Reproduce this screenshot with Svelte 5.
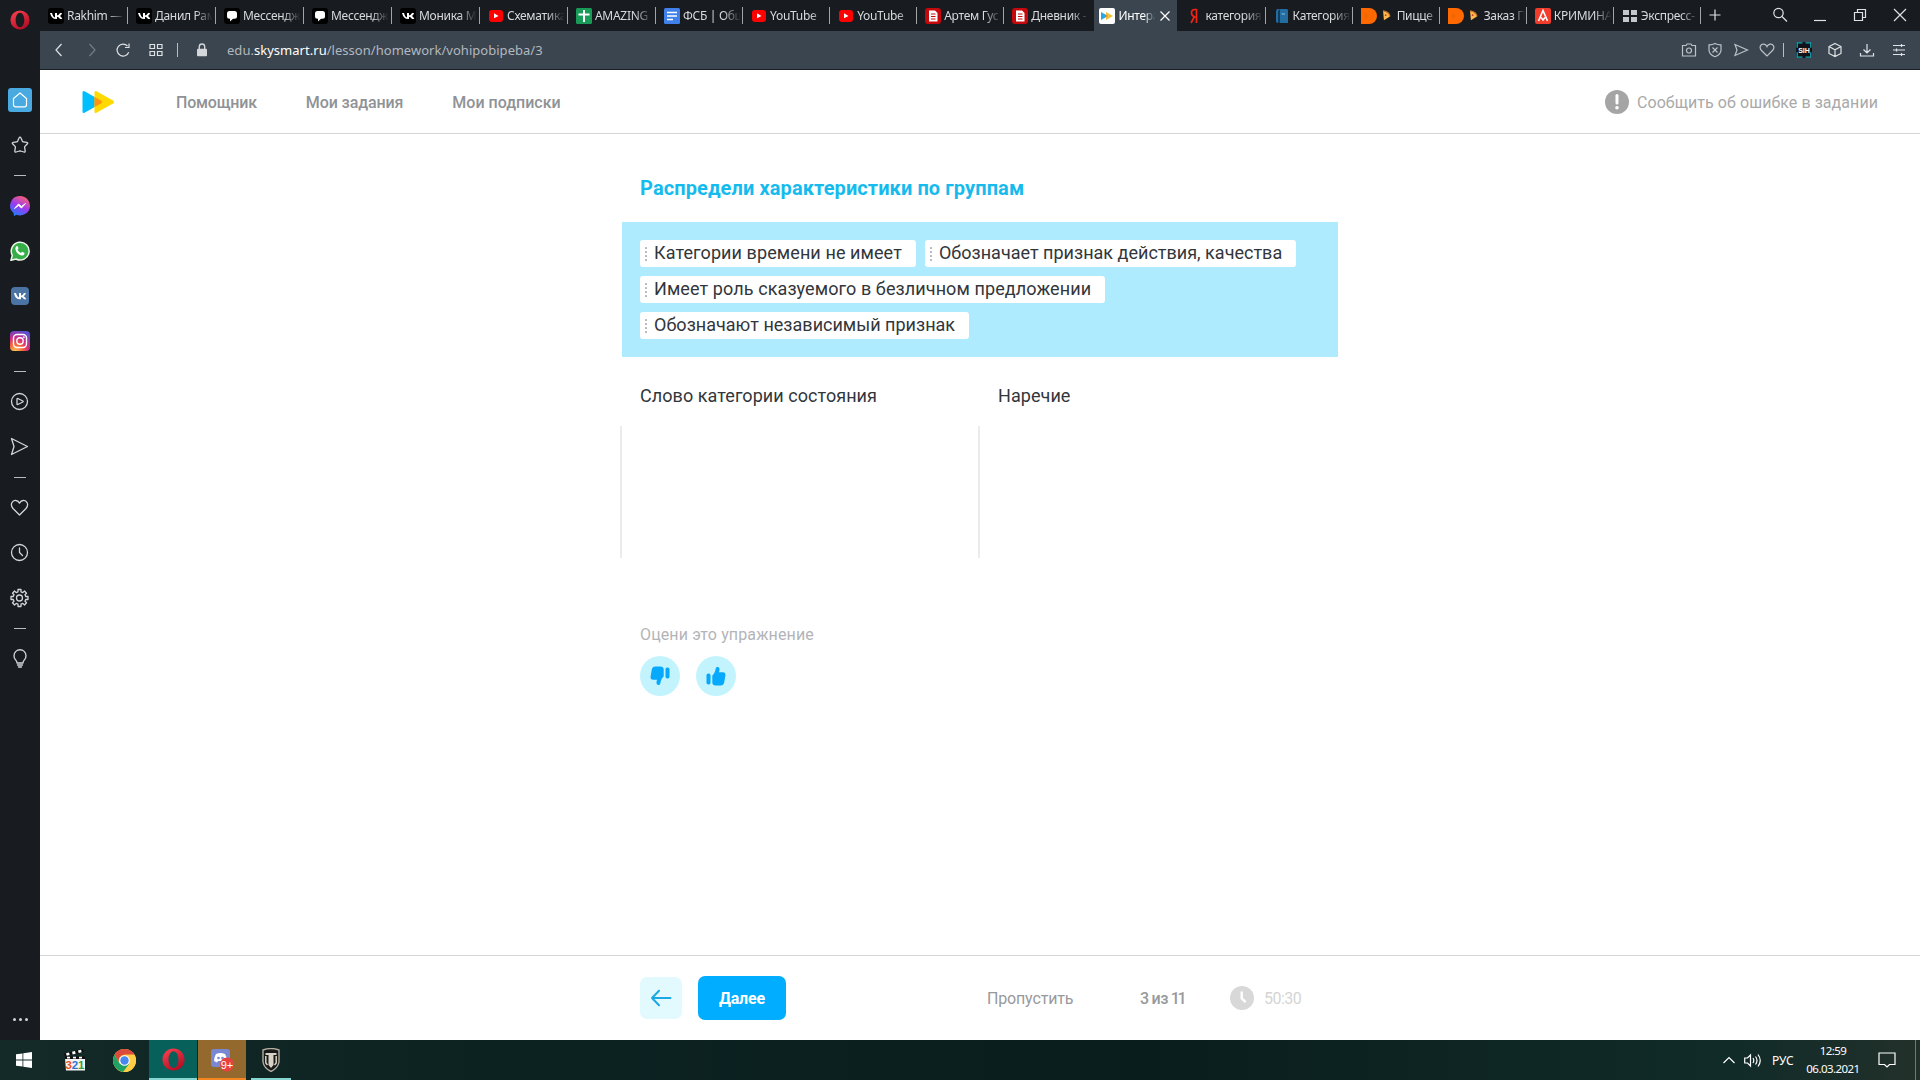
<script>
  const tabs = [
    ['vk', 'Rakhim — '], ['vk', 'Данил Рам'], ['msg', 'Мессендже'], ['msg', 'Мессендже'], ['vk', 'Моника М'],
    ['yt', 'Схематика'], ['sheet', 'AMAZING'], ['doc', 'ФСБ | Общ'], ['yt', 'YouTube'], ['yt', 'YouTube'],
    ['diary', 'Артем Гус'], ['diary', 'Дневник -'], ['sky', 'Интера'], ['ya', 'категория'], ['book', 'Категория'],
    ['dodo', 'Пицце'], ['dodo', 'Заказ П'], ['ali', 'КРИМИНА'], ['grid', 'Экспресс-']
  ];
  // Each chip is a label and whether it is set with wider tracking.
  const rows = [
    [['Категории времени не имеет', true], ['Обозначает признак действия, качества', false]],
    [['Имеет роль сказуемого в безличном предложении', true]],
    [['Обозначают независимый признак', false]]
  ];
  const side = ['home', 'star', '-', 'messenger', 'whatsapp', 'vk', 'insta', '-', 'play', 'send', '-', 'heart', 'clock', 'gear', '-', 'bulb'];
</script>

{#snippet favicon(k)}
  <svg class="fav" viewBox="0 0 16 16">
    {#if k === 'vk'}
      <rect width="16" height="16" rx="3" fill="#000" /><path d="M2 5h2q1 4 3 4.500V5h2v2.500Q11 7 12 5h2q-.5 2-2 3 1.500 1 2.300 3H12q-1-2-3-2.300V11H8Q3.500 11 2 5z" fill="#fff" />
    {:else if k === 'msg'}
      <rect width="16" height="16" rx="3" fill="#000" /><path d="M5.500 3h5A2.500 2.500 0 0 1 13 5.500v2.800a2.500 2.500 0 0 1-2.500 2.500H9L6 13.500v-2.700h-.5A2.500 2.500 0 0 1 3 8.300V5.500A2.500 2.500 0 0 1 5.500 3z" fill="#fff" />
    {:else if k === 'yt'}
      <rect x="1" y="2" width="14" height="12" rx="3" fill="#f00" /><path d="M6 5.300v5L10.500 8z" fill="#fff" />
    {:else if k === 'sheet'}
      <rect width="16" height="16" rx="1.500" fill="#199b58" /><path d="M8 2v12M2.500 6.500h11" stroke="#fff" stroke-width="2" />
    {:else if k === 'doc'}
      <rect width="16" height="16" rx="1.500" fill="#3f80ea" /><path d="M3 4.500h10M3 8h10M3 11.500h6" stroke="#fff" stroke-width="1.700" />
    {:else if k === 'diary'}
      <rect width="16" height="16" rx="3" fill="#c4080c" /><path d="M4 2.500h6l2.500 2.500v8.500H4z" fill="#fff" /><path d="M6 6h4.500M6 8.500h4.500M6 11h4.500" stroke="#c4080c" />
    {:else if k === 'sky'}
      <rect width="16" height="16" rx="2" fill="#fff" /><path d="M2 4l7 4-7 4z" fill="#28a8e8" /><path d="M7 4l7 4-7 4z" fill="#ecc23c" /><path d="M7 6.900L9 8 7 9.100z" fill="#e27a38" />
    {:else if k === 'ya'}
      <path d="M10.500 1v14M10.500 1.500H8.700Q5.500 1.500 5.500 5q0 3 4 4.200M8.200 8.800L5 15" fill="none" stroke="#f32313" stroke-width="1.700" />
    {:else if k === 'book'}
      <path d="M3 1h10l1 1v13H4l-2-1V3z" fill="#246da0" /><path d="M4 3l2-2v14H4z" fill="#123b60" /><path d="M7 5h4v2H8z" fill="#5598c2" />
    {:else if k === 'dodo'}
      <path d="M0 0h8a8 8 0 0 1 0 16H0z" fill="#ff6900" /><path d="M4 5l4 3-4 3z" fill="#ee6505" />
    {:else if k === 'ali'}
      <rect width="16" height="16" rx="2" fill="#f23c2b" /><path d="M3.500 13L8 2.500l4.500 10.500M6 9.500l2 2.500 2-2.500" fill="none" stroke="#fff" stroke-width="1.600" />
    {:else}
      <path d="M1 2h6v5H1zM9 2h6v5H9zM1 9h6v5H1zM9 9h6v5H9z" fill="#c5c7ca" />
    {/if}
  </svg>
{/snippet}

{#snippet operaO(size)}
  <svg width={size} height={size} viewBox="0 0 24 24"><defs><linearGradient id="og" x2=".6" y2="1"><stop stop-color="#ff4450" /><stop offset="1" stop-color="#b40e26" /></linearGradient></defs><path fill-rule="evenodd" fill="url(#og)" d="M12 .5a11.500 11.500 0 1 0 0 23 11.500 11.500 0 0 0 0-23zM12 3.300c3 0 5.200 3.800 5.200 8.700S15 20.700 12 20.700 6.800 16.900 6.800 12 9 3.300 12 3.300z" /></svg>
{/snippet}

{#snippet thumb()}
  <rect x="0.500" y="7.500" width="4" height="11" rx="1.800" /><path d="M6.300 9.500C8.500 8 9.300 5 9.800 2.300 10.100.6 12.800.3 13.400 2.400 13.800 4 13.200 5.400 12.900 6.300h4c2 0 2.800 1.500 2.500 3.200l-1.200 6.900c-.4 2-1.600 3-3.500 3H9.500c-2 0-3.200-1.200-3.200-3z" />
{/snippet}

<div class="screen">
  <aside>
    <div class="opera">{@render operaO(20)}</div>
    {#each side as s}
      {#if s === '-'}
        <div class="dash"><i></i></div>
      {:else}
        <div class="sitem">
          {#if s === 'home'}
            <svg class="home" viewBox="0 0 24 24"><path d="M12 5l6.500 5.500v6.300a2 2 0 0 1-2 2h-9a2 2 0 0 1-2-2v-6.300z" /></svg>
          {:else if s === 'messenger'}
            <svg class="color" viewBox="0 0 20 20"><defs><linearGradient id="mg" x1=".2" y1="1" x2=".7" y2="0"><stop stop-color="#1683ff" /><stop offset=".5" stop-color="#9a3bf2" /><stop offset="1" stop-color="#ff6070" /></linearGradient></defs><path d="M10 0a10 9.700 0 1 1-3.500 18.800L4 20l-.5-3A9.700 9.700 0 0 1 10 0z" fill="url(#mg)" /><path d="M4.500 12.500l4-4.500 3 2.500 4-3-4 4.500-3-2.500z" fill="#fff" stroke="#fff" /></svg>
          {:else if s === 'whatsapp'}
            <svg class="color" viewBox="0 0 20 20"><path d="M1 19.300l1.300-5A8.900 8.900 0 1 1 6 18z" fill="#36ae47" stroke="#eaf7ea" stroke-width="1.500" /><path d="M6 5.500q1.500-1 2 .5l.5 1.500-1 1.200q1.200 2.200 3.500 3.300l1.200-1.200 2.300 1.200q0 2.500-2.500 2.500Q6 13.500 5.300 7.500z" fill="#fff" /></svg>
          {:else if s === 'vk'}
            <svg class="color" viewBox="0 0 20 20"><rect x="1" y="1" width="18" height="18" rx="4" fill="#4b74a5" /><path d="M4 7h2q1.200 4.200 3 4.500V7h2v2.700Q13 9 14 7h2q-.6 2-2.300 3.200 1.700 1.100 2.600 3.100H14q-1-2-3-2.400v2.400H10Q5 13.300 4 7z" fill="#fff" /></svg>
          {:else if s === 'insta'}
            <svg class="color" viewBox="0 0 20 20"><defs><radialGradient id="ig" cx=".25" cy="1.050" r="1.100"><stop stop-color="#ffd25a" /><stop offset=".35" stop-color="#f5653c" /><stop offset=".65" stop-color="#d12a86" /><stop offset="1" stop-color="#5a4fd0" /></radialGradient></defs><rect width="20" height="20" rx="4" fill="url(#ig)" /><g fill="none" stroke="#fff" stroke-width="1.400"><rect x="3.500" y="3.500" width="13" height="13" rx="3.500" /><circle cx="10" cy="10" r="3.200" /><circle cx="13.800" cy="6.200" r=".3" /></g></svg>
          {:else}
            <svg class="line" viewBox="0 0 20 20">
              {#if s === 'star'}<path d="M10 2.200q.7 0 1 .8l1.300 3.100q.3.600 1 .7l3.500.5q1.500.4.600 1.500l-2.500 2.600q-.4.400-.3 1l.6 3.600q0 1.500-1.300 1L10.500 16H9.500l-3.400 1q-1.300.4-1.300-1l.6-3.600q.1-.6-.3-1L2.600 8.800Q1.700 7.700 3.200 7.300l3.500-.5q.7-.1 1-.7L9 3q.3-.8 1-.8z" />
              {:else if s === 'play'}<circle cx="9.500" cy="9.500" r="8" /><path d="M7 7q0-.8.800-.5l5 2.500q.8.500 0 1l-5 2.500Q7 12.800 7 12z" />
              {:else if s === 'send'}<path d="M1.500 1.500L17.500 9.500 1.500 17.500 4 9.500z" />
              {:else if s === 'heart'}<path d="M9.500 17L3 10.500C-.5 6.500 2.500 2 6 2.500c2 .2 3 1.500 3.500 2.700.5-1.200 1.500-2.500 3.500-2.700 3.500-.5 6.500 4 3 8z" />
              {:else if s === 'clock'}<circle cx="9.500" cy="9.500" r="8" /><path d="M9.500 5v4.500l3 3" />
              {:else if s === 'gear'}<path d="M8 1.500h3v2.300l1.800.8L14.500 3l2 2.200-1.500 1.600.7 1.700H18v3h-2.300l-.7 1.700 1.500 1.600-2 2.200-1.700-1.600-1.800.8v2.300H8v-2.300l-1.800-.8L4.500 17l-2-2.200L4 13.200l-.7-1.700H1v-3h2.300L4 6.800 2.500 5.200l2-2.200 1.700 1.600L8 3.800z" /><circle cx="9.500" cy="10" r="3" />
              {:else}<path d="M7 14q0-1.500-1.500-3.300a6 6 0 1 1 9 0Q13 12.500 13 14zM7.500 16h5M8.500 18h3" />{/if}
            </svg>
          {/if}
        </div>
      {/if}
    {/each}
    <div class="dots"><i></i><i></i><i></i></div>
  </aside>

  <div class="browser">
    <div class="tabbar">
      {#each tabs as [k, t], i}
        <div class="tab" class:wide={i < 7} class:active={i === 12} class:nosep={i === 11 || i === 12}>
          {@render favicon(k)}
          {#if k === 'dodo'}<svg class="pizza" viewBox="0 0 10 14"><path d="M1 1q7 1 8 6.500L2 12z" fill="#ffb84d" /><path d="M1 1q7 1 8 6.500" fill="none" stroke="#c87328" stroke-width="1.600" /><circle cx="4" cy="6" r="1" fill="#c23b22" /></svg>{/if}
          <span class="tt">{t}</span>
          {#if i === 12}<svg class="x" viewBox="0 0 12 12"><path d="M1.500 1.500l9 9M10.500 1.500l-9 9" /></svg>{/if}
        </div>
      {/each}
      <svg class="ui plus" viewBox="0 0 16 16"><path d="M8 2.500v11M2.500 8h11" /></svg>
      <div class="winctl">
        <svg class="ui" viewBox="0 0 16 16"><circle cx="6.500" cy="6" r="4.700" /><path d="M10 9.500l5 5" /></svg>
        <svg class="ui" viewBox="0 0 16 16"><path d="M2 13.500h12" /></svg>
        <svg class="ui" viewBox="0 0 16 16"><path d="M2.500 5.500h8v8h-8zM5.500 5.500v-3h8v8h-3" /></svg>
        <svg class="ui" viewBox="0 0 16 16"><path d="M2 2l12 12M14 2L2 14" /></svg>
      </div>
    </div>

    <div class="address">
      <svg class="ui back" viewBox="0 0 16 16"><path d="M10.500 2L5 8l5.500 6" /></svg>
      <svg class="ui fwd" viewBox="0 0 16 16"><path d="M5.500 2L11 8l-5.500 6" /></svg>
      <svg class="ui reload" viewBox="0 0 16 16"><path d="M13.700 10.200A6 6 0 1 1 12.500 4M14 1.500v4h-4" /></svg>
      <svg class="ui tiles" viewBox="0 0 16 16"><path d="M2 2.500h4.500v4H2zM9.500 2.500H14v4H9.500zM2 9.500h4.500v4H2zM9.500 9.500H14v4H9.500z" /></svg>
      <i class="vbar"></i>
      <svg class="lock" viewBox="0 0 12 14"><path d="M3.300 6V3.700a2.700 2.700 0 0 1 5.400 0V6" fill="none" stroke="#d3d7da" stroke-width="1.400" /><rect x="1" y="5.700" width="10" height="7.600" rx="1" fill="#d3d7da" /></svg>
      <div class="url">edu.<b>skysmart.ru</b>/lesson/homework/vohipobipeba/3</div>
      <div class="ext">
        <svg class="ui dim" viewBox="0 0 16 16"><path d="M1.500 3.500H5l1-1.500h4l1 1.500h3.500v10.500h-13z" /><circle cx="8" cy="8.500" r="2.500" /></svg>
        <svg class="ui dim" viewBox="0 0 16 16"><path d="M8 1.500Q11 3 14 2.800V8q0 4.500-6 6.700Q2 12.500 2 8V2.800Q5 3 8 1.500zM5.500 5.500l5 5M10.500 5.500l-5 5" /></svg>
        <svg class="ui dim" viewBox="0 0 16 16"><path d="M2 2.500L14.500 8 2 13.500 4 8z" /></svg>
        <svg class="ui dim" viewBox="0 0 16 16"><path d="M8 14L2.500 8.500C-.5 5 2 1.700 5 2.200 6.800 2.500 7.600 3.500 8 4.500c.4-1 1.200-2 3-2.300 3-.5 5.500 2.800 2.500 6.300z" /></svg>
        <i class="vbar"></i>
        <svg class="sih" viewBox="0 0 16 16"><rect width="16" height="16" rx="2" fill="#101418" /><path d="M6.500.8H1.200v5M9.500.8h5.300v5M6.500 15.200H1.200v-5M9.500 15.200h5.300v-5" fill="none" stroke="#13a8b8" stroke-width="1.300" /><text x="8" y="10.600" text-anchor="middle">SIH</text></svg>
        <svg class="ui" viewBox="0 0 16 16"><path d="M8 1.500l6 3v7l-6 3-6-3v-7zM2 4.500l6 3.200 6-3.200M8 7.700v6.800" /></svg>
        <svg class="ui" viewBox="0 0 16 16"><path d="M8 2v8.500M4.500 7.500L8 11l3.500-3.500M1.500 11v3h13v-3" /></svg>
        <svg class="ui" viewBox="0 0 16 16"><path d="M2 3.500h12M2 8h12M2 12.500h12M10.500 2v3M5.500 6.500v3M10.500 11v3" /></svg>
      </div>
    </div>

    <header>
      <svg class="logo" viewBox="0 0 32 24"><path d="M0.500 2.500Q.5.300 2.500 1.300L19 10.500q2 1.500 0 3L2.500 22.700Q.5 23.700.5 21.500z" fill="#00bfff" /><path d="M12.500 2.500q0-2.200 2-1.200L31 10.500q2 1.500 0 3l-16.500 9.200q-2 1-2-1.200z" fill="#ffd900" /><path d="M12.500 6.900L19 10.500q2 1.500 0 3l-6.500 3.600z" fill="#ff9314" /></svg>
      <nav><span class="n1">Помощник</span><span class="n2">Мои задания</span><span>Мои подписки</span></nav>
      <div class="report"><svg viewBox="0 0 24 24"><circle cx="12" cy="12" r="12" fill="#a5a5a5" /><path d="M12 5.500v7.500" stroke="#fff" stroke-width="3" stroke-linecap="round" /><circle cx="12" cy="17.800" r="1.800" fill="#fff" /></svg><span>Сообщить об ошибке в задании</span></div>
    </header>

    <main>
      <h1>Распредели характеристики по группам</h1>
      <section class="bank">
        {#each rows as r}
          <div class="row">
            {#each r as [label, loose]}
              <div class="chip"><svg viewBox="0 0 4 14" fill="#b4b8bb"><rect x="1" width="2" height="2" rx=".5" /><rect x="1" y="4" width="2" height="2" rx=".5" /><rect x="1" y="8" width="2" height="2" rx=".5" /><rect x="1" y="12" width="2" height="2" rx=".5" /></svg><span class:loose>{label}</span></div>
            {/each}
          </div>
        {/each}
      </section>
      <section class="groups">
        <div><h2>Слово категории состояния</h2><div class="drop"></div></div>
        <div><h2>Наречие</h2><div class="drop"></div></div>
      </section>
      <p class="rate">Оцени это упражнение</p>
      <div class="votes">
        <div><svg class="down" viewBox="0 0 20 20">{@render thumb()}</svg></div>
        <div><svg viewBox="0 0 20 20">{@render thumb()}</svg></div>
      </div>
    </main>

    <footer>
      <div class="prev"><svg viewBox="0 0 22 18"><path d="M20.500 9H2M9 1.800L2 9l7 7.200" /></svg></div>
      <div class="next">Далее</div>
      <span class="skip">Пропустить</span>
      <span class="count">3 из <i>11</i></span>
      <svg class="timer" viewBox="0 0 24 24"><circle cx="12" cy="12" r="12" fill="#d8d8d8" /><path d="M11.700 6.500v6l3.300 3" fill="none" stroke="#fff" stroke-width="2.400" stroke-linecap="round" /></svg>
      <span class="time">50:30</span>
    </footer>
  </div>

  <div class="taskbar">
    <div class="slot"><svg width="16" height="16" viewBox="0 0 16 16"><path d="M0 2.300l6.500-.9v6.100H0zM7.300 1.300L16 0v7.500H7.300zM0 8.400h6.500v6.200L0 13.700zM7.300 8.400H16V16l-8.700-1.300z" fill="#fff" /></svg></div>
    <div class="slot mpc"><svg width="22" height="22" viewBox="0 0 22 22"><path d="M1 9h20v12.500H2z" fill="#f4f4f4" /><path d="M0 4.500L19 0l.7 3L.7 7.500zM1 7.500h20v2.500H1z" fill="#111" /><path d="M2 4.200l3-.7.700 2.600-3 .7zM8 2.800l3-.7.700 2.600-3 .7zM14 1.400l3-.7.700 2.600-3 .7zM3 7.800h3v1.600H3zM9 7.800h3v1.600H9zM15 7.800h3v1.600h-3z" fill="#fff" /><text x="1.500" y="20" fill="#e8541c">3</text><text x="7.800" y="20" fill="#2c74d8">2</text><text x="14" y="20" fill="#38a030">1</text></svg></div>
    <div class="slot chrome"><svg width="23" height="23" viewBox="0 0 24 24"><circle cx="12" cy="12" r="12" fill="#ffce44" /><path d="M1.600 6A12 12 0 0 1 22.400 6H12a6 6 0 0 0-5.200 9z" fill="#dc4a3c" /><path d="M1.600 6a12 12 0 0 0 8.800 17.900L17.200 15H12a6 6 0 0 1-5.200 0z" fill="#1fa362" /><path d="M22.400 6H12l5.200 9-5.200 9A12 12 0 0 0 22.400 6z" fill="#ffce44" /><circle cx="12" cy="12" r="5.500" fill="#fff" /><circle cx="12" cy="12" r="4.400" fill="#4788ee" /></svg></div>
    <div class="slot opera-t">{@render operaO(23)}</div>
    <div class="slot discord"><svg width="24" height="24" viewBox="0 0 24 24"><rect x="1" y="1" width="19" height="18" rx="3" fill="#7a88d2" /><path d="M6 6q4.500-2 9 0 2 3 2 7l-3 1.500-1-1.500H8l-1 1.500L4 13q0-4 2-7z" fill="#fff" /><circle cx="8.500" cy="10" r="1.300" fill="#7a88d2" /><circle cx="12.500" cy="10" r="1.300" fill="#7a88d2" /><circle cx="17" cy="16.500" r="7" fill="#e8413d" /><text x="17" y="20.500" text-anchor="middle" fill="#fff">9+</text></svg></div>
    <div class="slot wot"><svg width="20" height="24" viewBox="0 0 20 24"><path d="M2 2q8-3 16 0v12q-1 6-8 9.500Q3 20 2 14z" fill="#17191a" stroke="#b3ad9f" stroke-width="1.400" /><path d="M4.500 5h11v2h-3v10L10 20l-2.500-3V7h-3z" fill="#d8d2c4" /><path d="M4.800 8v7l1.700 2M15.200 8v7l-1.700 2" fill="none" stroke="#d8d2c4" stroke-width="1.500" /></svg></div>
    <div class="tray">
      <svg class="chev" viewBox="0 0 12 8"><path d="M.5 7L6 1.500 11.500 7" /></svg>
      <svg class="spk" viewBox="0 0 17 15"><path d="M.7 5h2.800L6.500 2v11L3.500 10H.7zM9 5q1.500 2.500 0 5M11.500 3.500q3 4 0 8M14 1.500q4.500 6 0 12" /></svg>
      <span class="lang">РУС</span>
      <div class="dt"><span>12:59</span><span>06.03.2021</span></div>
      <svg class="notif" viewBox="0 0 18 16"><path d="M1 1h16v11.500h-5.500L9 15l-2.500-2.500H1z" /></svg>
      <i class="peek"></i>
    </div>
  </div>
</div>

<style>
  :global(body) { margin: 0; background: #fff; overflow: hidden; }
  * { box-sizing: border-box; }
  svg { display: block; flex: none; }
  span, .url, h1, h2 { white-space: pre; }
  .screen { width: 1920px; height: 1080px; display: grid; grid-template: 1040px 40px / 40px 1880px; font-family: Roboto, sans-serif; overflow: hidden; }
  aside { background: #181b20; display: flex; flex-direction: column; align-items: center; }
  .opera { height: 77.5px; padding-top: 10px; }
  .sitem { height: 45px; display: flex; align-items: center; }
  .home { width: 24px; height: 24px; background: #48aae0; border-radius: 3px; fill: none; stroke: #fff; stroke-width: 1.2; }
  .color { width: 20px; height: 20px; }
  .line { width: 20px; height: 20px; fill: none; stroke: #d4d6d8; stroke-width: 1.3; stroke-linejoin: round; stroke-linecap: round; }
  .dash { height: 16px; display: flex; align-items: center; }
  .dash i { width: 12px; height: 1px; background: #b9bbbd; }
  .dots { margin-top: auto; height: 41px; display: flex; align-items: center; gap: 3px; }
  .dots i { width: 3px; height: 3px; border-radius: 50%; background: #d4d6d8; }
  .browser { display: grid; grid-template-rows: 31px 39px 64px 821px 85px; min-width: 0; }
  .tabbar { background: #181b20; display: flex; font: 12px "Noto Sans", sans-serif; color: #d8dadc; }
  .tab { width: 87.08px; flex: none; display: flex; align-items: center; padding-left: 8px; }
  .wide { width: 88px; }
  .tab::after { content: ""; width: 1px; height: 17px; background: #a2a5a8; flex: none; margin-left: auto; }
  .tab.nosep::after { background: transparent; }
  .active { background: linear-gradient(#3b4550, #3b4550) 3px 0 / 83px 31px no-repeat; color: #fff; }
  .fav { width: 16px; height: 16px; }
  .pizza { width: 9px; height: 12px; margin-left: 5px; }
  .tt { margin-left: 3px; flex: 0 1 59px; min-width: 0; overflow: hidden; letter-spacing: -.3px; mask: linear-gradient(90deg, #000 68%, transparent 98%); }
  .pizza + .tt { margin-left: 6px; }
  .x { width: 12px; height: 12px; margin: 0 6px 0 3px; stroke: #fff; stroke-width: 1.2; }
  .ui { width: 16px; height: 16px; fill: none; stroke: #dfe2e4; stroke-width: 1.2; }
  .plus { margin: 7px 0 0 6px; }
  .winctl { margin-left: auto; padding: 7px 12px 0 0; display: flex; gap: 24px; }
  .address { background: #3b4550; border-bottom: 1px solid #1c2127; display: flex; align-items: center; padding-left: 11px; }
  .fwd { margin-left: 17px; opacity: .35; }
  .reload { margin-left: 15px; }
  .tiles { margin-left: 17px; }
  .vbar { width: 1px; height: 14px; background: #b8bdc1; margin-left: 13px; }
  .lock { width: 12px; height: 14px; margin-left: 18px; }
  .url { margin-left: 19px; font: 13px/18px "Noto Sans", sans-serif; color: #b2b8be; letter-spacing: .03px; }
  .url b { font-weight: 400; color: #fff; }
  .ext { margin-left: auto; display: flex; align-items: center; padding-right: 13px; }
  .ext .dim { margin-right: 10px; stroke: #bcc2c7; }
  .ext .vbar { margin: 0 12px 0 -2px; }
  .sih { width: 16px; height: 16px; margin-right: 15px; }
  .sih text { font: 700 7px "Liberation Sans", sans-serif; fill: #fff; }
  .sih ~ .ui { margin-right: 16px; }
  .sih ~ .ui:last-child { margin-right: 0; }
  header { background: #fff; border-bottom: 1px solid #d5d5d5; display: flex; align-items: center; padding: 0 42px; }
  .logo { width: 32px; height: 24px; }
  nav { display: flex; margin-left: 62px; padding-top: 2px; font-size: 16px; font-weight: 500; color: #8f9296; }
  nav span + span { margin-left: 49px; }
  .n1 { letter-spacing: -.22px; }
  .n2 { letter-spacing: -.1px; }
  .report { margin-left: auto; display: flex; align-items: center; gap: 8px; font-size: 16px; color: #a9a9a9; letter-spacing: .065px; }
  .report span { padding-top: 2px; }
  .report svg { width: 24px; height: 24px; }
  main { padding-left: 582px; color: #32363b; }
  h1 { margin: 0; padding: 41px 0 0 18px; font-size: 20px; line-height: 26px; height: 88px; color: #16bbee; font-weight: 700; letter-spacing: .1px; }
  .bank { width: 716px; height: 135px; background: #aeebfe; padding: 18px; display: flex; flex-direction: column; gap: 9px; font-size: 18px; }
  .row { display: flex; gap: 9px; }
  .chip { height: 27px; background: #fff; border-radius: 3px; display: flex; align-items: center; padding: 0 14px 0 4px; }
  .chip svg { width: 4px; height: 14px; margin-right: 6px; }
  .chip span { padding-bottom: 2px; letter-spacing: .01px; }
  .chip .loose { letter-spacing: .09px; }
  .groups { display: flex; font-size: 18px; margin-left: -2px; }
  .groups > div { width: 358px; }
  h2 { margin: 0; font-size: 18px; font-weight: 400; line-height: 24px; padding: 27px 0 0 20px; height: 69px; letter-spacing: .06px; }
  .drop { height: 132px; border-left: 2px solid #ebebeb; }
  .rate { margin: 66px 0 0 18px; font-size: 16px; line-height: 22px; color: #b3b4b8; letter-spacing: .13px; }
  .votes { display: flex; gap: 16px; margin: 10px 0 0 18px; }
  .votes div { width: 40px; height: 40px; border-radius: 50%; background: #c3f4fe; display: flex; align-items: center; justify-content: center; }
  .votes svg { width: 20px; height: 20px; fill: #06a9fb; }
  .down { transform: rotate(180deg); }
  footer { border-top: 1px solid #d5d8d8; display: flex; align-items: center; padding-left: 600px; font-size: 16px; color: #97999c; }
  .prev { width: 42px; height: 42px; border-radius: 7px; background: #e2fafe; display: flex; align-items: center; justify-content: center; }
  .prev svg { width: 22px; height: 18px; fill: none; stroke: #1ba9e6; stroke-width: 2; stroke-linecap: round; stroke-linejoin: round; }
  .next { width: 88px; height: 44px; margin-left: 16px; border-radius: 7px; background: #00adff; color: #fff; font-weight: 700; letter-spacing: -.15px; display: flex; align-items: center; justify-content: center; }
  .skip { width: 87px; margin-left: 201px; letter-spacing: -.16px; }
  .count { width: 44px; margin-left: 66px; font-weight: 500; letter-spacing: -.4px; word-spacing: -.8px; }
  .count i { font-style: normal; letter-spacing: -2.4px; }
  .timer { width: 24px; height: 24px; margin-left: 46px; }
  .time { margin-left: 10px; color: #d4d4d4; letter-spacing: -.5px; }
  .taskbar { grid-column: 1 / 3; background: linear-gradient(90deg, #142a28 0, #0c2221 25%, #0a1d1d 60%, #102b28 90%, #22302a); display: flex; font: 12px "Noto Sans", sans-serif; color: #fff; }
  .slot { width: 48px; display: flex; align-items: center; justify-content: center; }
  .mpc { width: 54px; }
  .mpc text { font: 700 11.5px "Liberation Sans", sans-serif; }
  .chrome { width: 44px; margin-right: 3px; }
  .opera-t { background: #07605a; border-bottom: 2px solid #85d5d0; }
  .discord { margin-left: 1px; background: #93692d; border-bottom: 2px solid #f5851f; padding-top: 2px; }
  .discord text { font: 11px "Liberation Sans", sans-serif; }
  .wot { width: 40px; margin-left: 5px; border-bottom: 2px solid #85d5d0; padding-top: 2px; }
  .tray { margin-left: auto; display: flex; align-items: center; }
  .tray svg { fill: none; stroke: #fff; stroke-width: 1.2; }
  .chev { width: 12px; height: 8px; }
  .spk { width: 17px; height: 15px; margin-left: 9px; }
  .lang { margin-left: 11px; width: 22px; }
  .dt { margin-left: 12px; width: 54px; display: flex; flex-direction: column; align-items: center; font-size: 11.5px; line-height: 18px; letter-spacing: -.55px; }
  .notif { width: 18px; height: 16px; margin-left: 18px; }
  .peek { width: 1px; height: 40px; background: #6e7a77; margin: 0 4px 0 19px; }
</style>
